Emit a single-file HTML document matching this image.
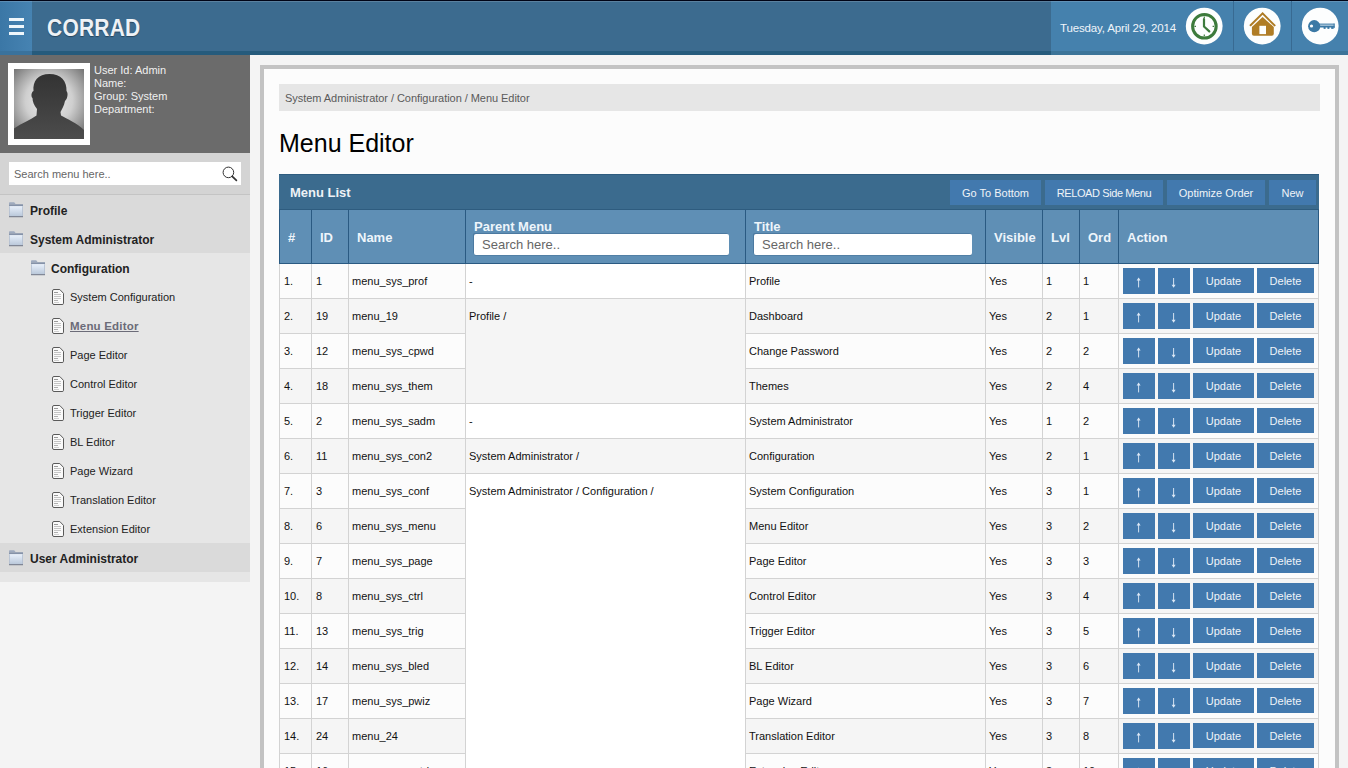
<!DOCTYPE html>
<html><head><meta charset="utf-8">
<style>
*{box-sizing:border-box;margin:0;padding:0}
html,body{width:1348px;height:768px;overflow:hidden;background:#f4f4f4;font-family:"Liberation Sans",sans-serif;font-size:11px;color:#222}
.abs{position:absolute}
#topline{left:0;top:0;width:1348px;height:1px;background:#000416}
#hilite{left:0;top:1px;width:1348px;height:1px;background:rgba(200,210,220,.22)}
#hdr{left:0;top:1px;width:1348px;height:54px;background:#3c6b8f;border-bottom:4px solid #265b7c}
#burger{left:0;top:1px;width:32px;height:54px;background:linear-gradient(90deg,#3b77a6,#4683b2);border-bottom:4px solid #3a729c}
#burger i{position:absolute;left:9px;width:15px;height:3px;background:#eef6fb}
#logo{left:47px;top:15px;font-size:23px;font-weight:bold;color:#eef2f6;letter-spacing:0.3px;transform:scaleX(0.91);transform-origin:0 0;text-shadow:0 1px 1px rgba(0,0,0,.35)}
#datebox{left:1051px;top:1px;width:297px;height:54px;background:#4581ad;border-bottom:4px solid #3c7498}
#date{left:1060px;top:21.5px;font-size:11.5px;letter-spacing:-0.15px;color:#f0f5fa}
.vdiv{top:1px;width:1px;height:50px;background:#386a92}
.circ{top:8px;width:37px;height:37px;border-radius:50%;background:#fff}
.circ svg{position:absolute;left:0;top:0}
#side{left:0;top:55px;width:250px;height:527px;background:#e6e6e6}
#prof{left:0;top:55px;width:250px;height:98px;background:#6b6b6b}
#avatar{left:8px;top:63px;width:82px;height:82px;background:#fff;padding:6px}
#uinfo{left:94px;top:64px;color:#f0f0f0;font-size:11px;line-height:13px}
#sbox{left:0;top:153px;width:250px;height:42px;background:#d4d4d4;border-bottom:1px solid #c4c4c4}
#sinput{left:9px;top:162px;width:232px;height:23px;background:#fff;color:#666;font-size:11px;padding:6px 0 0 5px}
.mi{position:absolute;left:0;width:250px;height:29px}
.mi .ic{position:absolute}
.mi span{position:absolute;top:9px;font-size:11px;color:#222;white-space:nowrap}
.mi.top{background:#dadada}
.mi span.b{font-weight:bold;font-size:12px;top:9px}
.mi span.cur{font-weight:bold;font-size:11.5px;letter-spacing:0.2px;color:#6b6b78;text-decoration:underline;top:9px}
#panel{left:260px;top:65px;width:1079px;height:720px;background:#fcfcfc;border:4px solid #c3c3c3}
#crumb{left:279px;top:84px;width:1041px;height:27px;background:#e6e6e6;color:#5a5a5a;letter-spacing:-0.05px;padding:8px 0 0 6px;font-size:11px}
#title{left:279px;top:129px;font-size:25px;color:#000}
#bar{left:279px;top:174px;width:1040px;height:36px;background:#3b6b8e;border-top:1px solid #2e5c7f;border-bottom:1px solid #2e5c7f}
#bar .lbl{position:absolute;left:11px;top:10px;color:#eef2f6;font-weight:bold;font-size:13px}
.tb{position:absolute;top:5px;height:25px;background:#4279ae;color:#f0f4f8;font-size:11px;text-align:center;padding-top:7px}
#thead{left:279px;top:210px;width:1040px;height:54px;background:#5f8fb5;border-bottom:1px solid #2a5a82}
.hv{position:absolute;top:210px;width:1px;height:54px;background:#2a5a82}
.th{position:absolute;font-weight:bold;font-size:13px;color:#eef5fb;white-space:nowrap}
.si{position:absolute;top:234px;height:21px;background:#fff;border-radius:2px;color:#666;font-size:13px;padding:3px 0 0 8px;box-shadow:-1px -1px 0 rgba(40,80,120,.35),0 1px 0 rgba(40,80,120,.25)}
.rb{position:absolute;left:279px;width:1040px;height:35px;background:#f5f5f5}
.pc{position:absolute;left:465px;width:280px}
.hl{position:absolute;height:1px;background:#d3d3d3}
.vl{position:absolute;width:1px;background:#d3d3d3}
.tx{position:absolute;font-size:11px;color:#111;white-space:nowrap}
.ab{position:absolute;height:25px;background:#4279ae;color:#f0f4f8;font-size:11px;text-align:center;padding-top:7px}
.ab.ar{width:32px;height:26px;padding:0}
.ab.ar svg{display:block}

</style></head><body>
<svg width="0" height="0" style="position:absolute"><defs>
<linearGradient id="fg" x1="0" y1="0" x2="0" y2="1"><stop offset="0" stop-color="#e8f0fb"/><stop offset="1" stop-color="#bac8da"/></linearGradient>
</defs></svg>
<div id="topline" class="abs"></div>
<div id="hdr" class="abs"></div>
<div id="burger" class="abs"><i style="top:17px"></i><i style="top:24px"></i><i style="top:31px"></i></div>
<div id="logo" class="abs">CORRAD</div>
<div id="datebox" class="abs"></div>
<div id="hilite" class="abs"></div>
<div id="date" class="abs">Tuesday, April 29, 2014</div>
<div class="abs vdiv" style="left:1233px"></div>
<div class="abs vdiv" style="left:1291px"></div>
<svg class="abs" style="left:1184px;top:6px" width="40" height="40" viewBox="0 0 40 40"><circle cx="20.2" cy="20.1" r="18.4" fill="#fdfefe"/><circle cx="20.4" cy="20.3" r="11.8" fill="none" stroke="#3d7b3c" stroke-width="3"/><path d="M20.3 10.4v1.6M20.3 28.6v1.6M10.4 20.3h1.6M28.6 20.3h1.6" stroke="#3d7b3c" stroke-width="1.2"/><path d="M20 13 V20.5 L25.3 25.4" fill="none" stroke="#3d7b3c" stroke-width="2.2" stroke-linecap="round" stroke-linejoin="round"/></svg>
<svg class="abs" style="left:1242px;top:6px" width="40" height="40" viewBox="0 0 40 40"><circle cx="20.2" cy="20.1" r="18.4" fill="#fdfefe"/><path d="M8.6 19.2 L20.6 7.4 L32.6 19.4" fill="none" stroke="#ae7b25" stroke-width="2" stroke-linecap="round" stroke-linejoin="miter"/><path d="M9.9 21 L20.6 10.9 L31.8 21 V27.7 Q31.8 29.7 29.8 29.7 H11.9 Q9.9 29.7 9.9 27.7 Z" fill="#b07d26"/><rect x="17.4" y="19.8" width="6.6" height="8.3" fill="#fdfefe"/></svg>
<svg class="abs" style="left:1300px;top:6px" width="40" height="40" viewBox="0 0 40 40"><circle cx="20.2" cy="20.1" r="18.4" fill="#fdfefe"/><circle cx="14.2" cy="20.2" r="6.1" fill="#3b79a5"/><circle cx="11.5" cy="20" r="1.6" fill="#fdfefe"/><rect x="19" y="17.6" width="15.6" height="1.1" fill="#3b79a5"/><rect x="19" y="19.5" width="15.6" height="2" fill="#3b79a5"/><rect x="33.6" y="17.6" width="1" height="4.5" fill="#3b79a5"/><rect x="23.6" y="21" width="2" height="1.9" fill="#3b79a5"/><rect x="27.4" y="21" width="2" height="1.9" fill="#3b79a5"/><rect x="31.2" y="21" width="2.4" height="1.9" fill="#3b79a5"/></svg>

<div id="side" class="abs"></div>
<div id="prof" class="abs"></div>
<div id="avatar" class="abs"><svg width="70" height="70" viewBox="0 0 70 70" style="display:block"><defs><radialGradient id="ag" cx="0.5" cy="0.45" r="0.75"><stop offset="0" stop-color="#f0f0f0"/><stop offset="0.45" stop-color="#cfcfcf"/><stop offset="1" stop-color="#5e5e5e"/></radialGradient><linearGradient id="sg" x1="0" y1="0" x2="0" y2="1"><stop offset="0" stop-color="#333"/><stop offset="1" stop-color="#4c4c4c"/></linearGradient></defs><rect width="70" height="70" fill="url(#ag)"/><path d="M23 40 C20 36 18.5 33 18.5 29 C17 28 17 23 19.5 22 C18.5 12 24 5 35.5 5 C47 5 53 12 52.5 22 C54.5 24 53.5 30 51 32 C50 37 48 40 46.5 43 L47 46.5 C53 50 63 54 70 61 L70 70 L0 70 L0 59.5 C8 54 16 51 22.5 46.5 Z" fill="url(#sg)"/></svg></div>
<div id="uinfo" class="abs">User Id: Admin<br>Name:<br>Group: System<br>Department:</div>
<div id="sbox" class="abs"></div>
<div id="sinput" class="abs">Search menu here..</div>
<svg class="abs" style="left:220px;top:164px" width="20" height="20" viewBox="0 0 20 20"><circle cx="8.4" cy="8.4" r="5.3" fill="none" stroke="#333" stroke-width="1"/><path d="M12.2 12.3 L16.4 16.4" stroke="#333" stroke-width="1.7" stroke-linecap="round"/></svg>

<div id="panel" class="abs"></div>
<div id="crumb" class="abs">System Administrator / Configuration / Menu Editor</div>
<div id="title" class="abs">Menu Editor</div>
<div id="bar" class="abs"><span class="lbl">Menu List</span>
<div class="tb" style="left:671px;width:91px">Go To Bottom</div>
<div class="tb" style="left:766px;width:118px;letter-spacing:-0.4px">RELOAD Side Menu</div>
<div class="tb" style="left:888px;width:98px">Optimize Order</div>
<div class="tb" style="left:990px;width:47px">New</div>
</div>

<div class="mi top" style="top:195px"><svg class="ic" style="left:8px;top:7px" width="16" height="16" viewBox="0 0 16 16"><path d="M1 2.6 V1 Q1 0.2 1.8 0.2 H6.2 L7.6 2 H15 V2.6 Z" fill="#9fabbf"/><rect x="1" y="2.4" width="14" height="1.8" fill="#8592a8"/><rect x="1" y="4.2" width="14" height="10" fill="url(#fg)"/><rect x="1" y="4.2" width="0.8" height="10" fill="#b3bfcf"/><rect x="14.2" y="4.2" width="0.8" height="10" fill="#b3bfcf"/><rect x="1" y="14.2" width="14" height="1" fill="#6c7384"/></svg><span class="b" style="left:30px">Profile</span></div>
<div class="mi top" style="top:224px"><svg class="ic" style="left:8px;top:7px" width="16" height="16" viewBox="0 0 16 16"><path d="M1 2.6 V1 Q1 0.2 1.8 0.2 H6.2 L7.6 2 H15 V2.6 Z" fill="#9fabbf"/><rect x="1" y="2.4" width="14" height="1.8" fill="#8592a8"/><rect x="1" y="4.2" width="14" height="10" fill="url(#fg)"/><rect x="1" y="4.2" width="0.8" height="10" fill="#b3bfcf"/><rect x="14.2" y="4.2" width="0.8" height="10" fill="#b3bfcf"/><rect x="1" y="14.2" width="14" height="1" fill="#6c7384"/></svg><span class="b" style="left:30px">System Administrator</span></div>
<div class="mi" style="top:253px"><svg class="ic" style="left:30px;top:7px" width="16" height="16" viewBox="0 0 16 16"><path d="M1 2.6 V1 Q1 0.2 1.8 0.2 H6.2 L7.6 2 H15 V2.6 Z" fill="#9fabbf"/><rect x="1" y="2.4" width="14" height="1.8" fill="#8592a8"/><rect x="1" y="4.2" width="14" height="10" fill="url(#fg)"/><rect x="1" y="4.2" width="0.8" height="10" fill="#b3bfcf"/><rect x="14.2" y="4.2" width="0.8" height="10" fill="#b3bfcf"/><rect x="1" y="14.2" width="14" height="1" fill="#6c7384"/></svg><span class="b" style="left:51px">Configuration</span></div>
<div class="mi" style="top:282px"><svg class="ic" style="left:51px;top:6px" width="14" height="18" viewBox="0 0 14 18"><path d="M1.5 3 Q1.5 1.5 3 1.5 H8.8 L12.5 5.4 V15.5 Q12.5 16.5 11 16.5 H3 Q1.5 16.5 1.5 15 Z" fill="#fafafa" stroke="#5a5a5a" stroke-width="1"/><rect x="3" y="4" width="4" height="1" fill="#9a9a9a"/><rect x="3" y="6" width="7" height="1" fill="#c4c4c4"/><rect x="3" y="8" width="7" height="1" fill="#c4c4c4"/><rect x="3" y="10" width="7" height="1" fill="#c8c8c8"/><rect x="3" y="12" width="4" height="1" fill="#b0b0b0"/><rect x="3" y="14" width="5" height="1" fill="#d0d0d0"/></svg><span style="left:70px">System Configuration</span></div>
<div class="mi" style="top:311px"><svg class="ic" style="left:51px;top:6px" width="14" height="18" viewBox="0 0 14 18"><path d="M1.5 3 Q1.5 1.5 3 1.5 H8.8 L12.5 5.4 V15.5 Q12.5 16.5 11 16.5 H3 Q1.5 16.5 1.5 15 Z" fill="#fafafa" stroke="#5a5a5a" stroke-width="1"/><rect x="3" y="4" width="4" height="1" fill="#9a9a9a"/><rect x="3" y="6" width="7" height="1" fill="#c4c4c4"/><rect x="3" y="8" width="7" height="1" fill="#c4c4c4"/><rect x="3" y="10" width="7" height="1" fill="#c8c8c8"/><rect x="3" y="12" width="4" height="1" fill="#b0b0b0"/><rect x="3" y="14" width="5" height="1" fill="#d0d0d0"/></svg><span class="cur" style="left:70px">Menu Editor</span></div>
<div class="mi" style="top:340px"><svg class="ic" style="left:51px;top:6px" width="14" height="18" viewBox="0 0 14 18"><path d="M1.5 3 Q1.5 1.5 3 1.5 H8.8 L12.5 5.4 V15.5 Q12.5 16.5 11 16.5 H3 Q1.5 16.5 1.5 15 Z" fill="#fafafa" stroke="#5a5a5a" stroke-width="1"/><rect x="3" y="4" width="4" height="1" fill="#9a9a9a"/><rect x="3" y="6" width="7" height="1" fill="#c4c4c4"/><rect x="3" y="8" width="7" height="1" fill="#c4c4c4"/><rect x="3" y="10" width="7" height="1" fill="#c8c8c8"/><rect x="3" y="12" width="4" height="1" fill="#b0b0b0"/><rect x="3" y="14" width="5" height="1" fill="#d0d0d0"/></svg><span style="left:70px">Page Editor</span></div>
<div class="mi" style="top:369px"><svg class="ic" style="left:51px;top:6px" width="14" height="18" viewBox="0 0 14 18"><path d="M1.5 3 Q1.5 1.5 3 1.5 H8.8 L12.5 5.4 V15.5 Q12.5 16.5 11 16.5 H3 Q1.5 16.5 1.5 15 Z" fill="#fafafa" stroke="#5a5a5a" stroke-width="1"/><rect x="3" y="4" width="4" height="1" fill="#9a9a9a"/><rect x="3" y="6" width="7" height="1" fill="#c4c4c4"/><rect x="3" y="8" width="7" height="1" fill="#c4c4c4"/><rect x="3" y="10" width="7" height="1" fill="#c8c8c8"/><rect x="3" y="12" width="4" height="1" fill="#b0b0b0"/><rect x="3" y="14" width="5" height="1" fill="#d0d0d0"/></svg><span style="left:70px">Control Editor</span></div>
<div class="mi" style="top:398px"><svg class="ic" style="left:51px;top:6px" width="14" height="18" viewBox="0 0 14 18"><path d="M1.5 3 Q1.5 1.5 3 1.5 H8.8 L12.5 5.4 V15.5 Q12.5 16.5 11 16.5 H3 Q1.5 16.5 1.5 15 Z" fill="#fafafa" stroke="#5a5a5a" stroke-width="1"/><rect x="3" y="4" width="4" height="1" fill="#9a9a9a"/><rect x="3" y="6" width="7" height="1" fill="#c4c4c4"/><rect x="3" y="8" width="7" height="1" fill="#c4c4c4"/><rect x="3" y="10" width="7" height="1" fill="#c8c8c8"/><rect x="3" y="12" width="4" height="1" fill="#b0b0b0"/><rect x="3" y="14" width="5" height="1" fill="#d0d0d0"/></svg><span style="left:70px">Trigger Editor</span></div>
<div class="mi" style="top:427px"><svg class="ic" style="left:51px;top:6px" width="14" height="18" viewBox="0 0 14 18"><path d="M1.5 3 Q1.5 1.5 3 1.5 H8.8 L12.5 5.4 V15.5 Q12.5 16.5 11 16.5 H3 Q1.5 16.5 1.5 15 Z" fill="#fafafa" stroke="#5a5a5a" stroke-width="1"/><rect x="3" y="4" width="4" height="1" fill="#9a9a9a"/><rect x="3" y="6" width="7" height="1" fill="#c4c4c4"/><rect x="3" y="8" width="7" height="1" fill="#c4c4c4"/><rect x="3" y="10" width="7" height="1" fill="#c8c8c8"/><rect x="3" y="12" width="4" height="1" fill="#b0b0b0"/><rect x="3" y="14" width="5" height="1" fill="#d0d0d0"/></svg><span style="left:70px">BL Editor</span></div>
<div class="mi" style="top:456px"><svg class="ic" style="left:51px;top:6px" width="14" height="18" viewBox="0 0 14 18"><path d="M1.5 3 Q1.5 1.5 3 1.5 H8.8 L12.5 5.4 V15.5 Q12.5 16.5 11 16.5 H3 Q1.5 16.5 1.5 15 Z" fill="#fafafa" stroke="#5a5a5a" stroke-width="1"/><rect x="3" y="4" width="4" height="1" fill="#9a9a9a"/><rect x="3" y="6" width="7" height="1" fill="#c4c4c4"/><rect x="3" y="8" width="7" height="1" fill="#c4c4c4"/><rect x="3" y="10" width="7" height="1" fill="#c8c8c8"/><rect x="3" y="12" width="4" height="1" fill="#b0b0b0"/><rect x="3" y="14" width="5" height="1" fill="#d0d0d0"/></svg><span style="left:70px">Page Wizard</span></div>
<div class="mi" style="top:485px"><svg class="ic" style="left:51px;top:6px" width="14" height="18" viewBox="0 0 14 18"><path d="M1.5 3 Q1.5 1.5 3 1.5 H8.8 L12.5 5.4 V15.5 Q12.5 16.5 11 16.5 H3 Q1.5 16.5 1.5 15 Z" fill="#fafafa" stroke="#5a5a5a" stroke-width="1"/><rect x="3" y="4" width="4" height="1" fill="#9a9a9a"/><rect x="3" y="6" width="7" height="1" fill="#c4c4c4"/><rect x="3" y="8" width="7" height="1" fill="#c4c4c4"/><rect x="3" y="10" width="7" height="1" fill="#c8c8c8"/><rect x="3" y="12" width="4" height="1" fill="#b0b0b0"/><rect x="3" y="14" width="5" height="1" fill="#d0d0d0"/></svg><span style="left:70px">Translation Editor</span></div>
<div class="mi" style="top:514px"><svg class="ic" style="left:51px;top:6px" width="14" height="18" viewBox="0 0 14 18"><path d="M1.5 3 Q1.5 1.5 3 1.5 H8.8 L12.5 5.4 V15.5 Q12.5 16.5 11 16.5 H3 Q1.5 16.5 1.5 15 Z" fill="#fafafa" stroke="#5a5a5a" stroke-width="1"/><rect x="3" y="4" width="4" height="1" fill="#9a9a9a"/><rect x="3" y="6" width="7" height="1" fill="#c4c4c4"/><rect x="3" y="8" width="7" height="1" fill="#c4c4c4"/><rect x="3" y="10" width="7" height="1" fill="#c8c8c8"/><rect x="3" y="12" width="4" height="1" fill="#b0b0b0"/><rect x="3" y="14" width="5" height="1" fill="#d0d0d0"/></svg><span style="left:70px">Extension Editor</span></div>
<div class="mi top" style="top:543px"><svg class="ic" style="left:8px;top:7px" width="16" height="16" viewBox="0 0 16 16"><path d="M1 2.6 V1 Q1 0.2 1.8 0.2 H6.2 L7.6 2 H15 V2.6 Z" fill="#9fabbf"/><rect x="1" y="2.4" width="14" height="1.8" fill="#8592a8"/><rect x="1" y="4.2" width="14" height="10" fill="url(#fg)"/><rect x="1" y="4.2" width="0.8" height="10" fill="#b3bfcf"/><rect x="14.2" y="4.2" width="0.8" height="10" fill="#b3bfcf"/><rect x="1" y="14.2" width="14" height="1" fill="#6c7384"/></svg><span class="b" style="left:30px">User Administrator</span></div>
<div id="thead" class="abs"></div>
<div class="hv" style="left:279px"></div>
<div class="hv" style="left:311px"></div>
<div class="hv" style="left:348px"></div>
<div class="hv" style="left:465px"></div>
<div class="hv" style="left:745px"></div>
<div class="hv" style="left:985px"></div>
<div class="hv" style="left:1042px"></div>
<div class="hv" style="left:1079px"></div>
<div class="hv" style="left:1118px"></div>
<div class="hv" style="left:1318px"></div>
<div class="th" style="left:288px;top:230px">#</div>
<div class="th" style="left:320px;top:230px">ID</div>
<div class="th" style="left:357px;top:230px">Name</div>
<div class="th" style="left:994px;top:230px">Visible</div>
<div class="th" style="left:1051px;top:230px">Lvl</div>
<div class="th" style="left:1088px;top:230px">Ord</div>
<div class="th" style="left:1127px;top:230px">Action</div>
<div class="th" style="left:474px;top:219px">Parent Menu</div>
<div class="th" style="left:754px;top:219px">Title</div>
<div class="si" style="left:474px;width:255px">Search here..</div>
<div class="si" style="left:754px;width:218px">Search here..</div>
<div class="rb" style="top:299px"></div>
<div class="rb" style="top:369px"></div>
<div class="rb" style="top:439px"></div>
<div class="rb" style="top:509px"></div>
<div class="rb" style="top:579px"></div>
<div class="rb" style="top:649px"></div>
<div class="rb" style="top:719px"></div>
<div class="pc" style="top:264px;height:35px;background:#ffffff"></div>
<div class="pc" style="top:299px;height:105px;background:#f5f5f5"></div>
<div class="pc" style="top:404px;height:35px;background:#ffffff"></div>
<div class="pc" style="top:439px;height:35px;background:#f5f5f5"></div>
<div class="pc" style="top:474px;height:315px;background:#ffffff"></div>
<div class="hl" style="top:298px;left:279px;width:1040px"></div>
<div class="hl" style="top:333px;left:279px;width:186px"></div>
<div class="hl" style="top:333px;left:745px;width:574px"></div>
<div class="hl" style="top:368px;left:279px;width:186px"></div>
<div class="hl" style="top:368px;left:745px;width:574px"></div>
<div class="hl" style="top:403px;left:279px;width:1040px"></div>
<div class="hl" style="top:438px;left:279px;width:1040px"></div>
<div class="hl" style="top:473px;left:279px;width:1040px"></div>
<div class="hl" style="top:508px;left:279px;width:186px"></div>
<div class="hl" style="top:508px;left:745px;width:574px"></div>
<div class="hl" style="top:543px;left:279px;width:186px"></div>
<div class="hl" style="top:543px;left:745px;width:574px"></div>
<div class="hl" style="top:578px;left:279px;width:186px"></div>
<div class="hl" style="top:578px;left:745px;width:574px"></div>
<div class="hl" style="top:613px;left:279px;width:186px"></div>
<div class="hl" style="top:613px;left:745px;width:574px"></div>
<div class="hl" style="top:648px;left:279px;width:186px"></div>
<div class="hl" style="top:648px;left:745px;width:574px"></div>
<div class="hl" style="top:683px;left:279px;width:186px"></div>
<div class="hl" style="top:683px;left:745px;width:574px"></div>
<div class="hl" style="top:718px;left:279px;width:186px"></div>
<div class="hl" style="top:718px;left:745px;width:574px"></div>
<div class="hl" style="top:753px;left:279px;width:186px"></div>
<div class="hl" style="top:753px;left:745px;width:574px"></div>
<div class="hl" style="top:788px;left:279px;width:1040px"></div>
<div class="vl" style="left:279px;top:264px;height:525px"></div>
<div class="vl" style="left:311px;top:264px;height:525px"></div>
<div class="vl" style="left:348px;top:264px;height:525px"></div>
<div class="vl" style="left:465px;top:264px;height:525px"></div>
<div class="vl" style="left:745px;top:264px;height:525px"></div>
<div class="vl" style="left:985px;top:264px;height:525px"></div>
<div class="vl" style="left:1042px;top:264px;height:525px"></div>
<div class="vl" style="left:1079px;top:264px;height:525px"></div>
<div class="vl" style="left:1118px;top:264px;height:525px"></div>
<div class="vl" style="left:1318px;top:264px;height:525px"></div>
<div class="tx" style="left:284px;top:275px">1.</div>
<div class="tx" style="left:316px;top:275px">1</div>
<div class="tx" style="left:352px;top:275px">menu_sys_prof</div>
<div class="tx" style="left:469px;top:275px">-</div>
<div class="tx" style="left:749px;top:275px">Profile</div>
<div class="tx" style="left:989px;top:275px">Yes</div>
<div class="tx" style="left:1046px;top:275px">1</div>
<div class="tx" style="left:1083px;top:275px">1</div>
<div class="ab ar" style="left:1123px;top:268px"><svg width="32" height="26" viewBox="0 0 32 26"><path d="M15.6 11 V19.4" stroke="#d4e2f1" stroke-width="1"/><path d="M13.6 12.6 L15.6 9.6 L17.6 12.6 Z" fill="#dce8f5"/></svg></div>
<div class="ab ar" style="left:1158px;top:268px"><svg width="32" height="26" viewBox="0 0 32 26"><path d="M15.6 10 V18.4" stroke="#d4e2f1" stroke-width="1"/><path d="M13.6 16.8 L15.6 19.8 L17.6 16.8 Z" fill="#dce8f5"/></svg></div>
<div class="ab" style="left:1193px;top:268px;width:61px">Update</div>
<div class="ab" style="left:1257px;top:268px;width:57px">Delete</div>
<div class="tx" style="left:284px;top:310px">2.</div>
<div class="tx" style="left:316px;top:310px">19</div>
<div class="tx" style="left:352px;top:310px">menu_19</div>
<div class="tx" style="left:469px;top:310px">Profile /</div>
<div class="tx" style="left:749px;top:310px">Dashboard</div>
<div class="tx" style="left:989px;top:310px">Yes</div>
<div class="tx" style="left:1046px;top:310px">2</div>
<div class="tx" style="left:1083px;top:310px">1</div>
<div class="ab ar" style="left:1123px;top:303px"><svg width="32" height="26" viewBox="0 0 32 26"><path d="M15.6 11 V19.4" stroke="#d4e2f1" stroke-width="1"/><path d="M13.6 12.6 L15.6 9.6 L17.6 12.6 Z" fill="#dce8f5"/></svg></div>
<div class="ab ar" style="left:1158px;top:303px"><svg width="32" height="26" viewBox="0 0 32 26"><path d="M15.6 10 V18.4" stroke="#d4e2f1" stroke-width="1"/><path d="M13.6 16.8 L15.6 19.8 L17.6 16.8 Z" fill="#dce8f5"/></svg></div>
<div class="ab" style="left:1193px;top:303px;width:61px">Update</div>
<div class="ab" style="left:1257px;top:303px;width:57px">Delete</div>
<div class="tx" style="left:284px;top:345px">3.</div>
<div class="tx" style="left:316px;top:345px">12</div>
<div class="tx" style="left:352px;top:345px">menu_sys_cpwd</div>
<div class="tx" style="left:749px;top:345px">Change Password</div>
<div class="tx" style="left:989px;top:345px">Yes</div>
<div class="tx" style="left:1046px;top:345px">2</div>
<div class="tx" style="left:1083px;top:345px">2</div>
<div class="ab ar" style="left:1123px;top:338px"><svg width="32" height="26" viewBox="0 0 32 26"><path d="M15.6 11 V19.4" stroke="#d4e2f1" stroke-width="1"/><path d="M13.6 12.6 L15.6 9.6 L17.6 12.6 Z" fill="#dce8f5"/></svg></div>
<div class="ab ar" style="left:1158px;top:338px"><svg width="32" height="26" viewBox="0 0 32 26"><path d="M15.6 10 V18.4" stroke="#d4e2f1" stroke-width="1"/><path d="M13.6 16.8 L15.6 19.8 L17.6 16.8 Z" fill="#dce8f5"/></svg></div>
<div class="ab" style="left:1193px;top:338px;width:61px">Update</div>
<div class="ab" style="left:1257px;top:338px;width:57px">Delete</div>
<div class="tx" style="left:284px;top:380px">4.</div>
<div class="tx" style="left:316px;top:380px">18</div>
<div class="tx" style="left:352px;top:380px">menu_sys_them</div>
<div class="tx" style="left:749px;top:380px">Themes</div>
<div class="tx" style="left:989px;top:380px">Yes</div>
<div class="tx" style="left:1046px;top:380px">2</div>
<div class="tx" style="left:1083px;top:380px">4</div>
<div class="ab ar" style="left:1123px;top:373px"><svg width="32" height="26" viewBox="0 0 32 26"><path d="M15.6 11 V19.4" stroke="#d4e2f1" stroke-width="1"/><path d="M13.6 12.6 L15.6 9.6 L17.6 12.6 Z" fill="#dce8f5"/></svg></div>
<div class="ab ar" style="left:1158px;top:373px"><svg width="32" height="26" viewBox="0 0 32 26"><path d="M15.6 10 V18.4" stroke="#d4e2f1" stroke-width="1"/><path d="M13.6 16.8 L15.6 19.8 L17.6 16.8 Z" fill="#dce8f5"/></svg></div>
<div class="ab" style="left:1193px;top:373px;width:61px">Update</div>
<div class="ab" style="left:1257px;top:373px;width:57px">Delete</div>
<div class="tx" style="left:284px;top:415px">5.</div>
<div class="tx" style="left:316px;top:415px">2</div>
<div class="tx" style="left:352px;top:415px">menu_sys_sadm</div>
<div class="tx" style="left:469px;top:415px">-</div>
<div class="tx" style="left:749px;top:415px">System Administrator</div>
<div class="tx" style="left:989px;top:415px">Yes</div>
<div class="tx" style="left:1046px;top:415px">1</div>
<div class="tx" style="left:1083px;top:415px">2</div>
<div class="ab ar" style="left:1123px;top:408px"><svg width="32" height="26" viewBox="0 0 32 26"><path d="M15.6 11 V19.4" stroke="#d4e2f1" stroke-width="1"/><path d="M13.6 12.6 L15.6 9.6 L17.6 12.6 Z" fill="#dce8f5"/></svg></div>
<div class="ab ar" style="left:1158px;top:408px"><svg width="32" height="26" viewBox="0 0 32 26"><path d="M15.6 10 V18.4" stroke="#d4e2f1" stroke-width="1"/><path d="M13.6 16.8 L15.6 19.8 L17.6 16.8 Z" fill="#dce8f5"/></svg></div>
<div class="ab" style="left:1193px;top:408px;width:61px">Update</div>
<div class="ab" style="left:1257px;top:408px;width:57px">Delete</div>
<div class="tx" style="left:284px;top:450px">6.</div>
<div class="tx" style="left:316px;top:450px">11</div>
<div class="tx" style="left:352px;top:450px">menu_sys_con2</div>
<div class="tx" style="left:469px;top:450px">System Administrator /</div>
<div class="tx" style="left:749px;top:450px">Configuration</div>
<div class="tx" style="left:989px;top:450px">Yes</div>
<div class="tx" style="left:1046px;top:450px">2</div>
<div class="tx" style="left:1083px;top:450px">1</div>
<div class="ab ar" style="left:1123px;top:443px"><svg width="32" height="26" viewBox="0 0 32 26"><path d="M15.6 11 V19.4" stroke="#d4e2f1" stroke-width="1"/><path d="M13.6 12.6 L15.6 9.6 L17.6 12.6 Z" fill="#dce8f5"/></svg></div>
<div class="ab ar" style="left:1158px;top:443px"><svg width="32" height="26" viewBox="0 0 32 26"><path d="M15.6 10 V18.4" stroke="#d4e2f1" stroke-width="1"/><path d="M13.6 16.8 L15.6 19.8 L17.6 16.8 Z" fill="#dce8f5"/></svg></div>
<div class="ab" style="left:1193px;top:443px;width:61px">Update</div>
<div class="ab" style="left:1257px;top:443px;width:57px">Delete</div>
<div class="tx" style="left:284px;top:485px">7.</div>
<div class="tx" style="left:316px;top:485px">3</div>
<div class="tx" style="left:352px;top:485px">menu_sys_conf</div>
<div class="tx" style="left:469px;top:485px">System Administrator / Configuration /</div>
<div class="tx" style="left:749px;top:485px">System Configuration</div>
<div class="tx" style="left:989px;top:485px">Yes</div>
<div class="tx" style="left:1046px;top:485px">3</div>
<div class="tx" style="left:1083px;top:485px">1</div>
<div class="ab ar" style="left:1123px;top:478px"><svg width="32" height="26" viewBox="0 0 32 26"><path d="M15.6 11 V19.4" stroke="#d4e2f1" stroke-width="1"/><path d="M13.6 12.6 L15.6 9.6 L17.6 12.6 Z" fill="#dce8f5"/></svg></div>
<div class="ab ar" style="left:1158px;top:478px"><svg width="32" height="26" viewBox="0 0 32 26"><path d="M15.6 10 V18.4" stroke="#d4e2f1" stroke-width="1"/><path d="M13.6 16.8 L15.6 19.8 L17.6 16.8 Z" fill="#dce8f5"/></svg></div>
<div class="ab" style="left:1193px;top:478px;width:61px">Update</div>
<div class="ab" style="left:1257px;top:478px;width:57px">Delete</div>
<div class="tx" style="left:284px;top:520px">8.</div>
<div class="tx" style="left:316px;top:520px">6</div>
<div class="tx" style="left:352px;top:520px">menu_sys_menu</div>
<div class="tx" style="left:749px;top:520px">Menu Editor</div>
<div class="tx" style="left:989px;top:520px">Yes</div>
<div class="tx" style="left:1046px;top:520px">3</div>
<div class="tx" style="left:1083px;top:520px">2</div>
<div class="ab ar" style="left:1123px;top:513px"><svg width="32" height="26" viewBox="0 0 32 26"><path d="M15.6 11 V19.4" stroke="#d4e2f1" stroke-width="1"/><path d="M13.6 12.6 L15.6 9.6 L17.6 12.6 Z" fill="#dce8f5"/></svg></div>
<div class="ab ar" style="left:1158px;top:513px"><svg width="32" height="26" viewBox="0 0 32 26"><path d="M15.6 10 V18.4" stroke="#d4e2f1" stroke-width="1"/><path d="M13.6 16.8 L15.6 19.8 L17.6 16.8 Z" fill="#dce8f5"/></svg></div>
<div class="ab" style="left:1193px;top:513px;width:61px">Update</div>
<div class="ab" style="left:1257px;top:513px;width:57px">Delete</div>
<div class="tx" style="left:284px;top:555px">9.</div>
<div class="tx" style="left:316px;top:555px">7</div>
<div class="tx" style="left:352px;top:555px">menu_sys_page</div>
<div class="tx" style="left:749px;top:555px">Page Editor</div>
<div class="tx" style="left:989px;top:555px">Yes</div>
<div class="tx" style="left:1046px;top:555px">3</div>
<div class="tx" style="left:1083px;top:555px">3</div>
<div class="ab ar" style="left:1123px;top:548px"><svg width="32" height="26" viewBox="0 0 32 26"><path d="M15.6 11 V19.4" stroke="#d4e2f1" stroke-width="1"/><path d="M13.6 12.6 L15.6 9.6 L17.6 12.6 Z" fill="#dce8f5"/></svg></div>
<div class="ab ar" style="left:1158px;top:548px"><svg width="32" height="26" viewBox="0 0 32 26"><path d="M15.6 10 V18.4" stroke="#d4e2f1" stroke-width="1"/><path d="M13.6 16.8 L15.6 19.8 L17.6 16.8 Z" fill="#dce8f5"/></svg></div>
<div class="ab" style="left:1193px;top:548px;width:61px">Update</div>
<div class="ab" style="left:1257px;top:548px;width:57px">Delete</div>
<div class="tx" style="left:284px;top:590px">10.</div>
<div class="tx" style="left:316px;top:590px">8</div>
<div class="tx" style="left:352px;top:590px">menu_sys_ctrl</div>
<div class="tx" style="left:749px;top:590px">Control Editor</div>
<div class="tx" style="left:989px;top:590px">Yes</div>
<div class="tx" style="left:1046px;top:590px">3</div>
<div class="tx" style="left:1083px;top:590px">4</div>
<div class="ab ar" style="left:1123px;top:583px"><svg width="32" height="26" viewBox="0 0 32 26"><path d="M15.6 11 V19.4" stroke="#d4e2f1" stroke-width="1"/><path d="M13.6 12.6 L15.6 9.6 L17.6 12.6 Z" fill="#dce8f5"/></svg></div>
<div class="ab ar" style="left:1158px;top:583px"><svg width="32" height="26" viewBox="0 0 32 26"><path d="M15.6 10 V18.4" stroke="#d4e2f1" stroke-width="1"/><path d="M13.6 16.8 L15.6 19.8 L17.6 16.8 Z" fill="#dce8f5"/></svg></div>
<div class="ab" style="left:1193px;top:583px;width:61px">Update</div>
<div class="ab" style="left:1257px;top:583px;width:57px">Delete</div>
<div class="tx" style="left:284px;top:625px">11.</div>
<div class="tx" style="left:316px;top:625px">13</div>
<div class="tx" style="left:352px;top:625px">menu_sys_trig</div>
<div class="tx" style="left:749px;top:625px">Trigger Editor</div>
<div class="tx" style="left:989px;top:625px">Yes</div>
<div class="tx" style="left:1046px;top:625px">3</div>
<div class="tx" style="left:1083px;top:625px">5</div>
<div class="ab ar" style="left:1123px;top:618px"><svg width="32" height="26" viewBox="0 0 32 26"><path d="M15.6 11 V19.4" stroke="#d4e2f1" stroke-width="1"/><path d="M13.6 12.6 L15.6 9.6 L17.6 12.6 Z" fill="#dce8f5"/></svg></div>
<div class="ab ar" style="left:1158px;top:618px"><svg width="32" height="26" viewBox="0 0 32 26"><path d="M15.6 10 V18.4" stroke="#d4e2f1" stroke-width="1"/><path d="M13.6 16.8 L15.6 19.8 L17.6 16.8 Z" fill="#dce8f5"/></svg></div>
<div class="ab" style="left:1193px;top:618px;width:61px">Update</div>
<div class="ab" style="left:1257px;top:618px;width:57px">Delete</div>
<div class="tx" style="left:284px;top:660px">12.</div>
<div class="tx" style="left:316px;top:660px">14</div>
<div class="tx" style="left:352px;top:660px">menu_sys_bled</div>
<div class="tx" style="left:749px;top:660px">BL Editor</div>
<div class="tx" style="left:989px;top:660px">Yes</div>
<div class="tx" style="left:1046px;top:660px">3</div>
<div class="tx" style="left:1083px;top:660px">6</div>
<div class="ab ar" style="left:1123px;top:653px"><svg width="32" height="26" viewBox="0 0 32 26"><path d="M15.6 11 V19.4" stroke="#d4e2f1" stroke-width="1"/><path d="M13.6 12.6 L15.6 9.6 L17.6 12.6 Z" fill="#dce8f5"/></svg></div>
<div class="ab ar" style="left:1158px;top:653px"><svg width="32" height="26" viewBox="0 0 32 26"><path d="M15.6 10 V18.4" stroke="#d4e2f1" stroke-width="1"/><path d="M13.6 16.8 L15.6 19.8 L17.6 16.8 Z" fill="#dce8f5"/></svg></div>
<div class="ab" style="left:1193px;top:653px;width:61px">Update</div>
<div class="ab" style="left:1257px;top:653px;width:57px">Delete</div>
<div class="tx" style="left:284px;top:695px">13.</div>
<div class="tx" style="left:316px;top:695px">17</div>
<div class="tx" style="left:352px;top:695px">menu_sys_pwiz</div>
<div class="tx" style="left:749px;top:695px">Page Wizard</div>
<div class="tx" style="left:989px;top:695px">Yes</div>
<div class="tx" style="left:1046px;top:695px">3</div>
<div class="tx" style="left:1083px;top:695px">7</div>
<div class="ab ar" style="left:1123px;top:688px"><svg width="32" height="26" viewBox="0 0 32 26"><path d="M15.6 11 V19.4" stroke="#d4e2f1" stroke-width="1"/><path d="M13.6 12.6 L15.6 9.6 L17.6 12.6 Z" fill="#dce8f5"/></svg></div>
<div class="ab ar" style="left:1158px;top:688px"><svg width="32" height="26" viewBox="0 0 32 26"><path d="M15.6 10 V18.4" stroke="#d4e2f1" stroke-width="1"/><path d="M13.6 16.8 L15.6 19.8 L17.6 16.8 Z" fill="#dce8f5"/></svg></div>
<div class="ab" style="left:1193px;top:688px;width:61px">Update</div>
<div class="ab" style="left:1257px;top:688px;width:57px">Delete</div>
<div class="tx" style="left:284px;top:730px">14.</div>
<div class="tx" style="left:316px;top:730px">24</div>
<div class="tx" style="left:352px;top:730px">menu_24</div>
<div class="tx" style="left:749px;top:730px">Translation Editor</div>
<div class="tx" style="left:989px;top:730px">Yes</div>
<div class="tx" style="left:1046px;top:730px">3</div>
<div class="tx" style="left:1083px;top:730px">8</div>
<div class="ab ar" style="left:1123px;top:723px"><svg width="32" height="26" viewBox="0 0 32 26"><path d="M15.6 11 V19.4" stroke="#d4e2f1" stroke-width="1"/><path d="M13.6 12.6 L15.6 9.6 L17.6 12.6 Z" fill="#dce8f5"/></svg></div>
<div class="ab ar" style="left:1158px;top:723px"><svg width="32" height="26" viewBox="0 0 32 26"><path d="M15.6 10 V18.4" stroke="#d4e2f1" stroke-width="1"/><path d="M13.6 16.8 L15.6 19.8 L17.6 16.8 Z" fill="#dce8f5"/></svg></div>
<div class="ab" style="left:1193px;top:723px;width:61px">Update</div>
<div class="ab" style="left:1257px;top:723px;width:57px">Delete</div>
<div class="tx" style="left:284px;top:765px">15.</div>
<div class="tx" style="left:316px;top:765px">16</div>
<div class="tx" style="left:352px;top:765px">menu_sys_extd</div>
<div class="tx" style="left:749px;top:765px">Extension Editor</div>
<div class="tx" style="left:989px;top:765px">Yes</div>
<div class="tx" style="left:1046px;top:765px">3</div>
<div class="tx" style="left:1083px;top:765px">10</div>
<div class="ab ar" style="left:1123px;top:758px"><svg width="32" height="26" viewBox="0 0 32 26"><path d="M15.6 11 V19.4" stroke="#d4e2f1" stroke-width="1"/><path d="M13.6 12.6 L15.6 9.6 L17.6 12.6 Z" fill="#dce8f5"/></svg></div>
<div class="ab ar" style="left:1158px;top:758px"><svg width="32" height="26" viewBox="0 0 32 26"><path d="M15.6 10 V18.4" stroke="#d4e2f1" stroke-width="1"/><path d="M13.6 16.8 L15.6 19.8 L17.6 16.8 Z" fill="#dce8f5"/></svg></div>
<div class="ab" style="left:1193px;top:758px;width:61px">Update</div>
<div class="ab" style="left:1257px;top:758px;width:57px">Delete</div>
</body></html>
